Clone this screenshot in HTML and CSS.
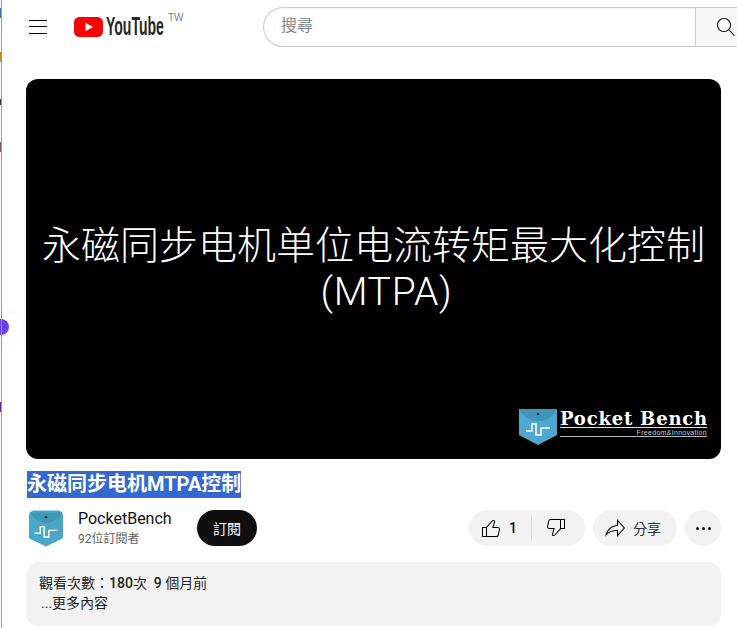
FILE: index.html
```html
<!DOCTYPE html>
<html lang="en">

<head>
    <meta charset="UTF-8" />
    <meta name="viewport" content="width=device-width, initial-scale=1.0" />
    <title>YouTube</title>
    <link rel="stylesheet" href="styles.css">
</head>

<body>
    <!-- sliver of the window behind -->
    <div class="edge">
        <i class="chip chip-blue"></i>
        <i class="chip chip-orange"></i>
        <i class="chip chip-dark"></i>
        <i class="chip chip-mix"></i>
        <i class="chip chip-purple"></i>
    </div>
    <div class="float-bubble"><i class="float-dot"></i></div>

    <header class="topbar">
        <div class="menu-btn"><span></span><span></span><span></span></div>
        <div class="logo">
            <svg class="logo-mark" width="29" height="20" viewBox="0 0 29 20">
                <rect width="29" height="20" rx="5.5" fill="#ff0000" />
                <path d="M11.5 5.7 19 10l-7.500 4.300z" fill="#fff" />
            </svg>
            <span class="logo-word">YouTube</span>
            <span class="logo-region">TW</span>
        </div>
        <div class="search">
            <div class="search-input">搜尋</div>
            <div class="search-btn">
                <svg width="24" height="24" viewBox="0 0 24 24">
                    <path d="m20.87 20.170-5.590-5.590C16.350 13.350 17 11.750 17 10c0-3.870-3.130-7-7-7s-7 3.130-7 7 3.130 7 7 7c1.750 0 3.350-.65 4.580-1.710l5.590 5.590.7-.71zM10 16c-3.310 0-6-2.690-6-6s2.690-6 6-6 6 2.690 6 6-2.690 6-6 6z" />
                </svg>
            </div>
        </div>
    </header>

    <main class="content">
        <div class="video">
            <div class="video-title">
                <div>永磁同步电机单位电流转矩最大化控制</div>
                <div class="video-title-sub">(MTPA)</div>
            </div>
            <div class="watermark">
                <svg width="38" height="38" viewBox="0 0 38 38">
                    <path d="M0 1h38v26l-19 10L0 27z" fill="#4ea8cf" />
                    <path d="M0 1c5 9 12 12 19 12s14-3 19-12" fill="#3f94ba" />
                    <circle cx="19" cy="6" r="1.200" fill="#123" />
                    <path d="M7 23h6v-7h4v11h5v-7h9" fill="none" stroke="#fff" stroke-width="1.500" />
                </svg>
                <div class="watermark-text">
                    <div class="watermark-name">Pocket Bench</div>
                    <div class="watermark-tag">Freedom&amp;Innovation</div>
                </div>
            </div>
        </div>

        <h1 class="title"><span class="selected">永磁同步电机MTPA控制</span></h1>

        <div class="meta-row">
            <div class="channel">
                <svg class="avatar" width="36" height="39" viewBox="0 0 38 40">
                    <path d="M1 7c0-3 2-6 6-6h24c4 0 6 3 6 6v22c0 1-.5 1.500-1.500 2L19 39 2.500 31C1.500 30.500 1 30 1 29z" fill="#4aa8c6" />
                    <path d="M2 3c5 8 10 11 17 11S31 11 36 3" fill="#3f97b5" />
                    <circle cx="19" cy="8" r="1.300" fill="#234" />
                    <path d="M7 25h6v-7h4v11h5v-7h9" fill="none" stroke="#fff" stroke-width="1.500" />
                </svg>
                <div class="channel-info">
                    <div class="channel-name">PocketBench</div>
                    <div class="channel-subs">92位訂閱者</div>
                </div>
                <button class="subscribe">訂閱</button>
            </div>
            <div class="actions">
                <div class="pill like-pill">
                    <div class="like">
                        <svg width="24" height="24" viewBox="0 0 24 24">
                            <path d="M18.770 11h-4.230l1.520-4.940C16.380 5.030 15.540 4 14.380 4c-.58 0-1.140.24-1.520.65L7 11H3v10h14.430c1.060 0 1.980-.67 2.190-1.610l1.340-6c.27-1.240-.78-2.390-2.190-2.390zM7 20H4v-8h3v8zm12.980-6.830-1.340 6c-.1.48-.61.83-1.210.83H8v-8.610l5.600-6.060c.19-.21.48-.33.78-.33.26 0 .5.11.63.3.07.1.15.26.09.47l-1.520 4.940-.4 1.290h5.580c.41 0 .8.17 1.030.46.13.15.26.4.19.71z" />
                        </svg>
                        <span class="like-count">1</span>
                    </div>
                    <div class="dislike">
                        <svg class="flip" width="24" height="24" viewBox="0 0 24 24">
                            <path d="M18.770 11h-4.230l1.520-4.940C16.380 5.030 15.540 4 14.380 4c-.58 0-1.140.24-1.520.65L7 11H3v10h14.430c1.060 0 1.980-.67 2.190-1.610l1.340-6c.27-1.240-.78-2.390-2.190-2.390zM7 20H4v-8h3v8zm12.980-6.830-1.340 6c-.1.48-.61.83-1.210.83H8v-8.610l5.600-6.060c.19-.21.48-.33.78-.33.26 0 .5.11.63.3.07.1.15.26.09.47l-1.520 4.940-.4 1.290h5.580c.41 0 .8.17 1.030.46.13.15.26.4.19.71z" />
                        </svg>
                    </div>
                </div>
                <div class="pill share-pill">
                    <svg width="24" height="24" viewBox="0 0 24 24">
                        <path d="M15 5.630 20.660 12 15 18.370V14h-1c-3.960 0-7.140 1-9.750 3.090 1.840-4.070 5.110-6.400 9.890-7.100l.86-.13V5.630M14 3v6C6.220 10.130 3.110 15.330 2 21c2.780-3.970 6.440-6 12-6v6l8-9-8-9z" />
                    </svg>
                    <span class="share-label">分享</span>
                </div>
                <div class="more"><i></i><i></i><i></i></div>
            </div>
        </div>

        <div class="description">
            <div class="views">觀看次數：<span class="num">180</span>次&nbsp;&nbsp;<span class="num">9</span> 個月前</div>
            <div class="expand">...更多內容</div>
        </div>
    </main>
</body>

</html>
```

FILE: styles.css
```css
html,
body {
    height: 100%;
}

body {
    margin: 0;
    background: #fff;
    color: #0f0f0f;
    font-family: Roboto, "Noto Sans CJK TC", sans-serif;
    overflow: hidden;
}

svg {
    display: block;
    flex-shrink: 0;
}

/* window behind, left edge */
.edge {
    position: absolute;
    left: 0;
    top: 0;
    z-index: 1;
    width: 1px;
    height: 100%;
    border-right: 1px solid #9a9a9a;
}

.chip {
    position: absolute;
    left: 0;
    width: 1px;
    height: 10px;
}

.chip-blue {
    top: 8px;
    background: #3a78c0;
}

.chip-orange {
    top: 52px;
    background: #c08a20;
}

.chip-dark {
    top: 99px;
    height: 6px;
    background: #333;
}

.chip-mix {
    top: 142px;
    background: #8a5a7a;
}

.chip-purple {
    top: 402px;
    background: #5a2a90;
}

.float-bubble {
    position: absolute;
    left: -24px;
    top: 312px;
    width: 46px;
    height: 30px;
    border-radius: 15px;
    background: #fff;
    box-shadow: 0 0 12px rgba(0, 0, 0, 0.05);
}

.float-dot {
    position: absolute;
    right: 13px;
    top: 7px;
    width: 16px;
    height: 16px;
    border-radius: 50%;
    background: #6a3ff0;
}

/* top bar */
.topbar {
    display: flex;
    align-items: center;
    height: 53px;
    padding-left: 29px;
}

.menu-btn {
    display: flex;
    flex-direction: column;
    flex-shrink: 0;
    gap: 5.500px;
    width: 18px;
    margin-right: 27px;
}

.menu-btn span {
    height: 1px;
    background: #030303;
}

.logo {
    display: flex;
    align-items: center;
    width: 189px;
    flex-shrink: 0;
}

.logo-word {
    flex-shrink: 0;
    width: 58px;
    margin-left: 3px;
    font-family: "Liberation Sans", sans-serif;
    font-size: 25px;
    font-weight: 700;
    white-space: nowrap;
    color: #282828;
    transform: scaleX(0.56);
    transform-origin: left center;
}

.logo-region {
    align-self: flex-start;
    margin-left: 4px;
    font-family: "Liberation Sans", sans-serif;
    font-size: 10px;
    color: #808080;
}

.search {
    display: flex;
    flex-shrink: 0;
    height: 40px;
    margin-top: 1px;
}

.search-input {
    width: 432px;
    box-sizing: border-box;
    padding-left: 17px;
    border: 1px solid #ccc;
    border-right: none;
    border-radius: 20px 0 0 20px;
    box-shadow: inset 0 1px 2px #eee;
    line-height: 36px;
    font-size: 16px;
    color: #888;
}

.search-btn {
    display: flex;
    align-items: center;
    width: 64px;
    box-sizing: border-box;
    padding-left: 18px;
    border: 1px solid #ccc;
    background: #f8f8f8;
}

/* main column */
.content {
    width: 695px;
    margin: 26px 0 0 26px;
}

.video {
    position: relative;
    display: flex;
    align-items: center;
    justify-content: center;
    height: 380px;
    border-radius: 12px;
    background: #000;
}

.video-title {
    font-family: Roboto, "Noto Sans CJK SC", sans-serif;
    font-size: 39px;
    font-weight: 300;
    line-height: 46px;
    text-align: center;
    color: #fff;
}

.video-title-sub {
    padding-left: 26px;
    letter-spacing: 0.800px;
}

.watermark {
    position: absolute;
    right: 14px;
    bottom: 13px;
    display: flex;
    gap: 3px;
}

.watermark-name {
    width: 147px;
    padding: 3px 0 1px;
    font-family: "DejaVu Serif", serif;
    font-size: 18px;
    font-weight: 700;
    line-height: 15px;
    letter-spacing: 0.800px;
    white-space: nowrap;
    color: #fff;
    border-bottom: 1px solid #ddd;
}

.watermark-tag {
    padding-top: 2px;
    font-family: "Liberation Sans", sans-serif;
    font-size: 7px;
    line-height: 6px;
    letter-spacing: 0.300px;
    text-align: right;
    color: #ccc;
    border-bottom: 1px solid #bbb;
}

.title {
    display: flex;
    margin: 12px 0 0 1px;
    font-family: Roboto, "Noto Sans CJK SC", sans-serif;
    font-size: 20px;
    font-weight: 700;
    line-height: 27px;
}

.selected {
    background: #3367d1;
    color: #fff;
}

.meta-row {
    display: flex;
    align-items: center;
    justify-content: space-between;
    height: 36px;
    margin-top: 12px;
}

.channel {
    display: flex;
    align-items: center;
}

.avatar {
    margin-left: 2px;
}

.channel-info {
    width: 119px;
    margin-left: 14px;
}

.channel-name {
    font-size: 16px;
    line-height: 18px;
}

.channel-subs {
    margin-top: 3px;
    font-size: 12px;
    line-height: 16px;
    color: #606060;
}

.subscribe {
    width: 60px;
    height: 36px;
    border: none;
    border-radius: 18px;
    background: #0f0f0f;
    color: #fff;
    font-family: inherit;
    font-size: 14px;
}

.actions {
    display: flex;
    gap: 8px;
}

.pill {
    display: flex;
    align-items: center;
    height: 36px;
    border-radius: 18px;
    background: #f2f2f2;
}

.like-pill {
    width: 116px;
}

.like {
    display: flex;
    align-items: center;
    gap: 6px;
    width: 63px;
    box-sizing: border-box;
    padding-left: 10px;
    height: 24px;
    border-right: 1px solid #ddd;
}

.like-count {
    font-size: 14px;
    font-weight: 500;
}

.dislike {
    padding-left: 12px;
}

.flip {
    transform: rotate(180deg);
}

.share-pill {
    width: 84px;
    gap: 6px;
    box-sizing: border-box;
    padding-left: 10px;
}

.share-label {
    font-size: 14px;
    color: #333;
}

.more {
    display: flex;
    align-items: center;
    justify-content: center;
    gap: 3px;
    width: 36px;
    height: 36px;
    border-radius: 50%;
    background: #f2f2f2;
}

.more i {
    width: 3px;
    height: 3px;
    border-radius: 50%;
    background: #0f0f0f;
}

.description {
    height: 64px;
    box-sizing: border-box;
    margin-top: 16px;
    padding: 11px 13px;
    border-radius: 12px;
    background: #f2f2f2;
    font-size: 14px;
    line-height: 20px;
    color: #222;
}

.num {
    font-weight: 500;
}

.expand {
    padding-left: 2px;
}
```
